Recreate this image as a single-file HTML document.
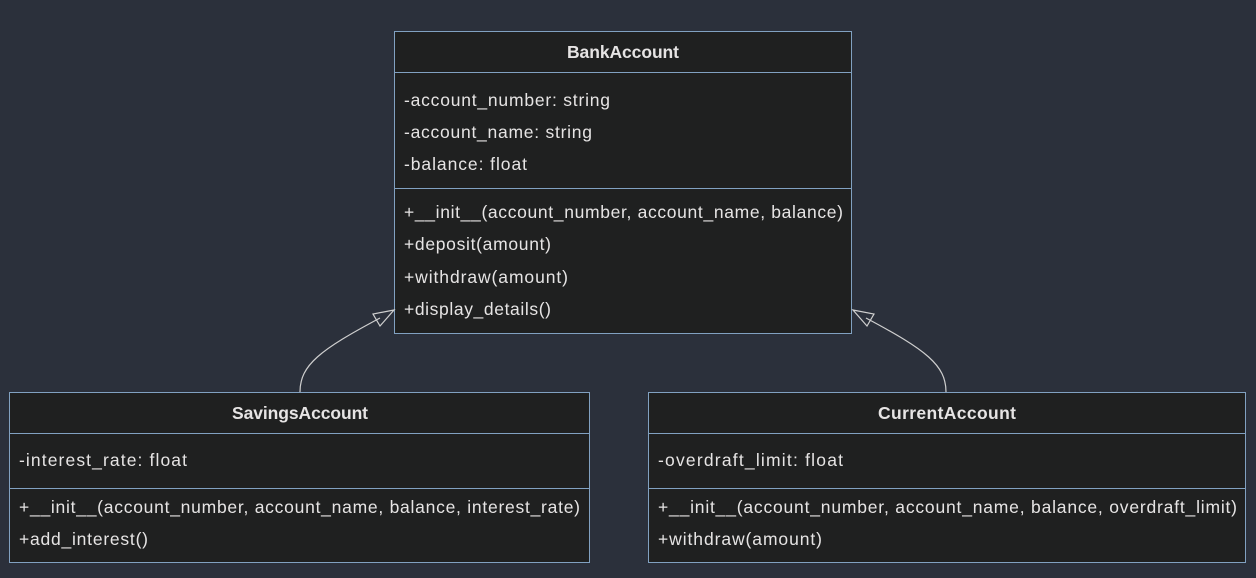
<!DOCTYPE html>
<html><head><style>
html,body{margin:0;padding:0;background:#2b303b;}
svg{display:block}
text{font-family:"Liberation Sans","DejaVu Sans",sans-serif;font-size:17.5px;fill:#e6e4e4;}
.t{font-weight:bold;text-anchor:middle}
</style></head><body>
<svg width="1256" height="578" viewBox="0 0 1256 578">
<rect width="1256" height="578" fill="#2b303b"/>
<g fill="#1f2020" stroke="#81a1c1" stroke-width="1">
<rect x="394.5" y="31.5" width="457" height="302"/>
<rect x="9.5" y="392.5" width="580" height="170"/>
<rect x="648.5" y="392.5" width="597" height="170"/>
</g>
<g stroke="#81a1c1" stroke-width="1">
<line x1="394" y1="72.5" x2="852" y2="72.5"/>
<line x1="394" y1="188.5" x2="852" y2="188.5"/>
<line x1="9" y1="433.5" x2="590" y2="433.5"/>
<line x1="9" y1="488.5" x2="590" y2="488.5"/>
<line x1="648" y1="433.5" x2="1246" y2="433.5"/>
<line x1="648" y1="488.5" x2="1246" y2="488.5"/>
</g>
<g fill="none" stroke="#cfcfcf" stroke-width="1.2">
<path d="M300 392 C300 365 320 350 380 318"/>
<path d="M946 392 C946 365 926 350 866 318"/>
<path d="M394 310 L373 314 L380 326 Z"/>
<path d="M853 310 L874 314 L867 326 Z"/>
</g>
<text class="t" x="623" y="58" textLength="112">BankAccount</text>
<text x="404" y="106" textLength="206">-account_number: string</text>
<text x="404" y="138" textLength="188">-account_name: string</text>
<text x="404" y="170" textLength="123">-balance: float</text>
<text x="404" y="218" textLength="439">+__init__(account_number, account_name, balance)</text>
<text x="404" y="250" textLength="147">+deposit(amount)</text>
<text x="404" y="283" textLength="164">+withdraw(amount)</text>
<text x="404" y="315" textLength="147">+display_details()</text>
<text class="t" x="300" y="419" textLength="136">SavingsAccount</text>
<text x="19" y="466" textLength="168">-interest_rate: float</text>
<text x="19" y="513" textLength="561">+__init__(account_number, account_name, balance, interest_rate)</text>
<text x="19" y="545" textLength="129">+add_interest()</text>
<text class="t" x="947" y="419" textLength="138">CurrentAccount</text>
<text x="658" y="466" textLength="185">-overdraft_limit: float</text>
<text x="658" y="513" textLength="579">+__init__(account_number, account_name, balance, overdraft_limit)</text>
<text x="658" y="545" textLength="164">+withdraw(amount)</text>
</svg>
</body></html>
